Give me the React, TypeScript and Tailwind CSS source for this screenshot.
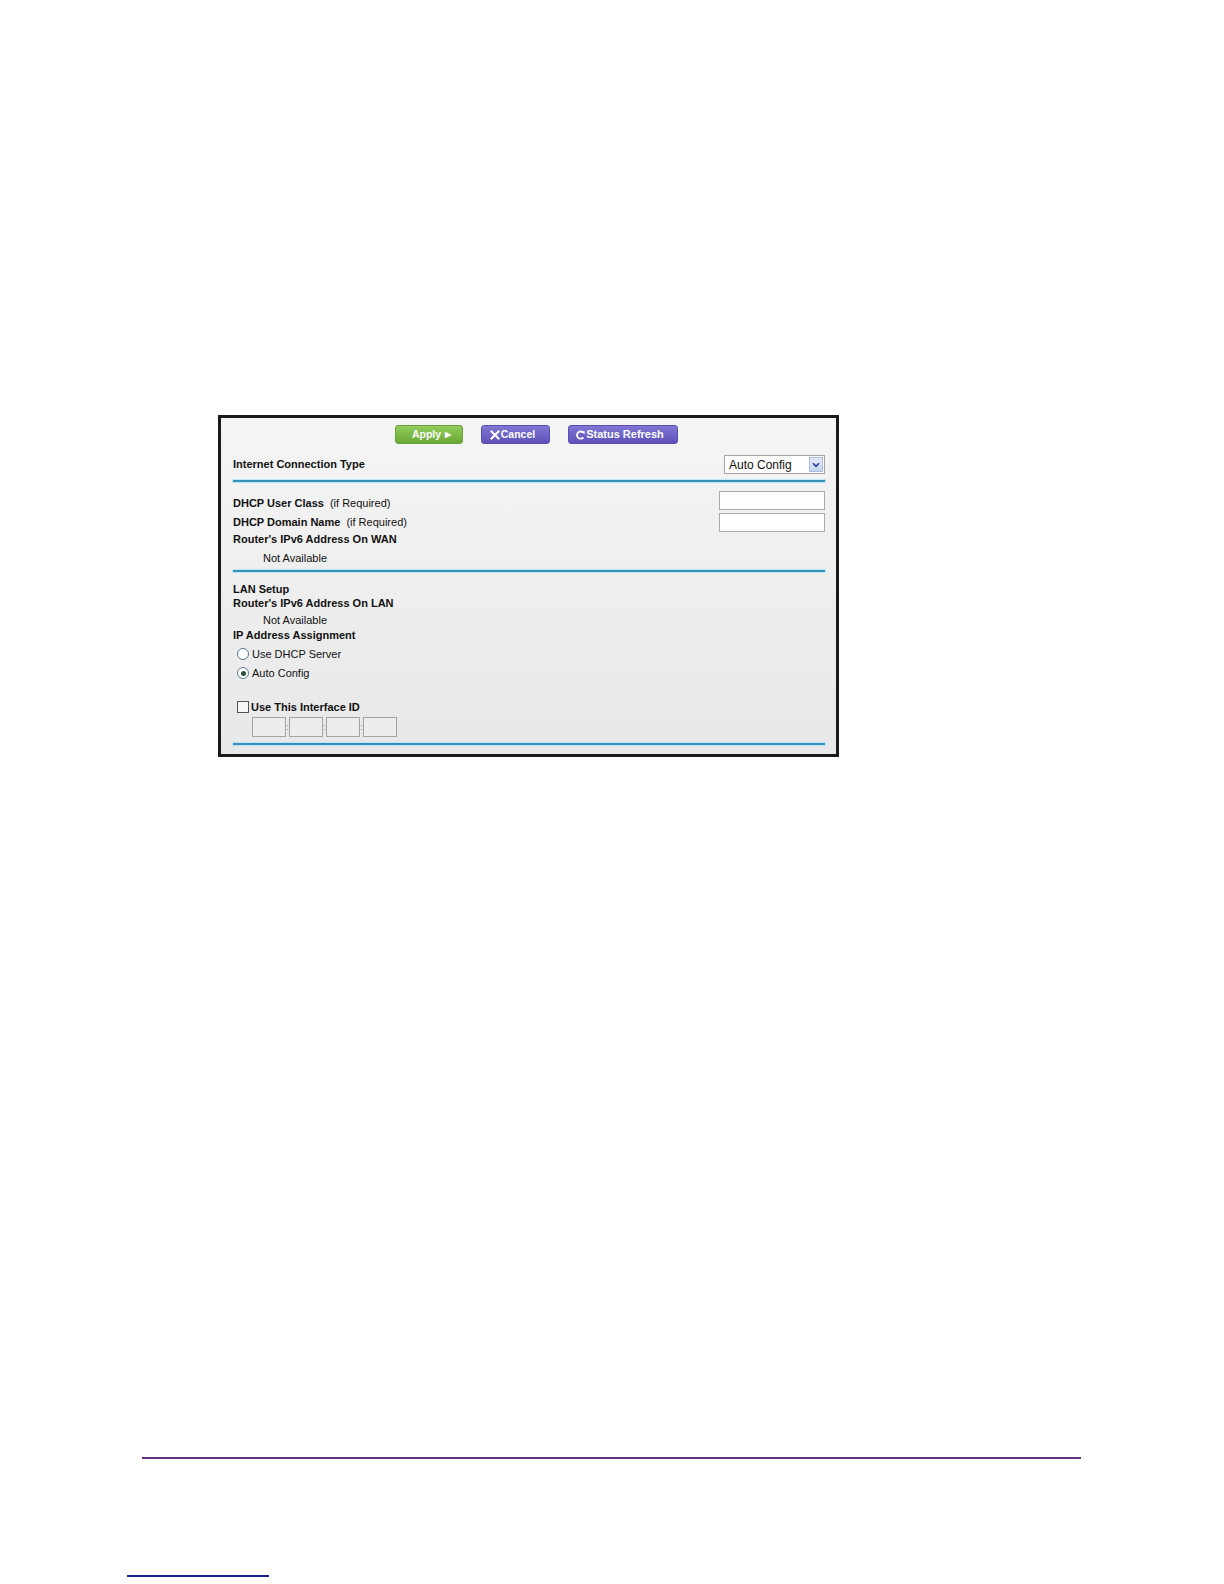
import React from "react";

const FONT = { fontFamily: '"Liberation Sans", Arial, sans-serif' };

function Rule() {
  return <div className="h-[2px] bg-[#3490b8] shadow-[0_0_1px_1px_#bfe5f3]" />;
}

function Radio({ checked }: { checked?: boolean }) {
  return (
    <span className="w-[12px] h-[12px] rounded-full border border-[#5d7890] bg-white flex items-center justify-center">
      {checked && <span className="w-[5px] h-[5px] rounded-full bg-[#2f4f3a]" />}
    </span>
  );
}

function CancelIcon() {
  return (
    <svg width="10" height="10" viewBox="0 0 10 10">
      <path d="M1.5 1.5 L8.5 8.5 M8.5 1.5 L1.5 8.5" stroke="#fff" strokeWidth="2" strokeLinecap="square" />
    </svg>
  );
}

function RefreshIcon() {
  return (
    <svg width="9" height="10" viewBox="0 0 9 10">
      <path d="M7.2 2.6 A3.6 3.6 0 1 0 7.4 7.4" stroke="#fff" strokeWidth="1.8" fill="none" />
      <path d="M5.2 1.2 L8.6 1.2 L8.6 4.4 Z" fill="#fff" />
    </svg>
  );
}

export default function App() {
  return (
    <div className="w-[1224px] h-[1584px] bg-white flex flex-col" style={FONT}>
      <div className="ml-[218px] mt-[415px] w-[621px] h-[342px] border-[3px] border-[#1a1a1a] bg-gradient-to-b from-[#f5f5f5] to-[#e8e8e8] pl-[12px] pr-[11px] pt-[7px] text-[11px] text-[#111] flex flex-col">
        {/* action buttons */}
        <div className="flex pl-[162px] gap-[18px] h-[19px]">
          <button className="w-[68px] h-[19px] rounded-[3px] bg-gradient-to-b from-[#93cc5c] to-[#6aa934] border border-[#6aa03c] text-white font-bold text-[10.5px] flex items-center justify-center gap-[4px] pl-[5px]">
            Apply
            <span className="text-[8px] leading-none">▶</span>
          </button>
          <button className="w-[69px] h-[19px] rounded-[3px] bg-gradient-to-b from-[#8176d4] to-[#5d51b8] border border-[#5a4fae] text-white font-bold text-[10.5px] flex items-center justify-center gap-[1px] pr-[6px]">
            <CancelIcon />
            Cancel
          </button>
          <button className="w-[110px] h-[19px] rounded-[3px] bg-gradient-to-b from-[#8176d4] to-[#5d51b8] border border-[#5a4fae] text-white font-bold text-[11px] flex items-center justify-center gap-[1px] pr-[6px]">
            <RefreshIcon />
            Status Refresh
          </button>
        </div>

        <div className="mt-[11px] h-[19px] flex items-center justify-between">
          <span className="font-bold">Internet Connection Type</span>
          <div className="w-[101px] h-[19px] border border-[#a4a4a4] bg-white flex items-center justify-between pl-[4px] pr-[1px]">
            <span className="text-[12px]">Auto Config</span>
            <span className="w-[14px] h-[15px] bg-gradient-to-b from-[#e3ebf8] to-[#c6d5ef] border border-[#a9bddf] flex items-center justify-center">
              <svg width="8" height="6" viewBox="0 0 8 6">
                <path d="M1 1.2 L4 4.4 L7 1.2" stroke="#2b3f8c" strokeWidth="1.6" fill="none" />
              </svg>
            </span>
          </div>
        </div>

        <div className="mt-[6px]">
          <Rule />
        </div>

        <div className="mt-[9px] h-[19px] flex justify-between">
          <span className="mt-[5px] leading-[14px]">
            <span className="font-bold">DHCP User Class</span>
            <span className="ml-[6px]">(if Required)</span>
          </span>
          <span className="w-[106px] h-[19px] border border-[#a9a9a9] bg-white" />
        </div>
        <div className="mt-[3px] h-[19px] flex items-center justify-between">
          <span>
            <span className="font-bold">DHCP Domain Name</span>
            <span className="ml-[6px]">(if Required)</span>
          </span>
          <span className="w-[106px] h-[19px] border border-[#a9a9a9] bg-white" />
        </div>
        <div className="h-[14px] leading-[14px] font-bold">Router's IPv6 Address On WAN</div>
        <div className="mt-[5px] h-[14px] leading-[14px] pl-[30px]">Not Available</div>

        <div className="mt-[5px]">
          <Rule />
        </div>

        <div className="mt-[10px] h-[14px] leading-[14px] font-bold">LAN Setup</div>
        <div className="h-[14px] leading-[14px] font-bold">Router's IPv6 Address On LAN</div>
        <div className="mt-[3px] h-[14px] leading-[14px] pl-[30px]">Not Available</div>
        <div className="mt-[1px] h-[14px] leading-[14px] font-bold">IP Address Assignment</div>
        <div className="mt-[4px] h-[16px] flex items-center gap-[3px] pl-[4px]">
          <Radio />
          <span>Use DHCP Server</span>
        </div>
        <div className="mt-[3px] h-[16px] flex items-center gap-[3px] pl-[4px]">
          <Radio checked />
          <span>Auto Config</span>
        </div>

        <div className="mt-[19px] h-[14px] flex items-center gap-[2px] pl-[4px]">
          <span className="w-[12px] h-[12px] border border-[#555] bg-[#f6f6f6]" />
          <span className="font-bold">Use This Interface ID</span>
        </div>
        <div className="mt-[3px] h-[20px] flex items-center pl-[19px]">
          {[0, 1, 2, 3].map((i) => (
            <React.Fragment key={i}>
              {i > 0 && <span className="w-[3px] text-center text-[9px] text-[#888] leading-none">:</span>}
              <span className="w-[34px] h-[20px] border border-[#a3a3a3] bg-[#ededed]" />
            </React.Fragment>
          ))}
        </div>

        <div className="mt-[6px]">
          <Rule />
        </div>
      </div>

      <div className="ml-[142px] mt-[700px] w-[939px] h-[1.5px] bg-[#6b3585]" />
      <div className="ml-[127px] mt-[116px] w-[142px] h-[2px] bg-[#1a1f96]" />
    </div>
  );
}
